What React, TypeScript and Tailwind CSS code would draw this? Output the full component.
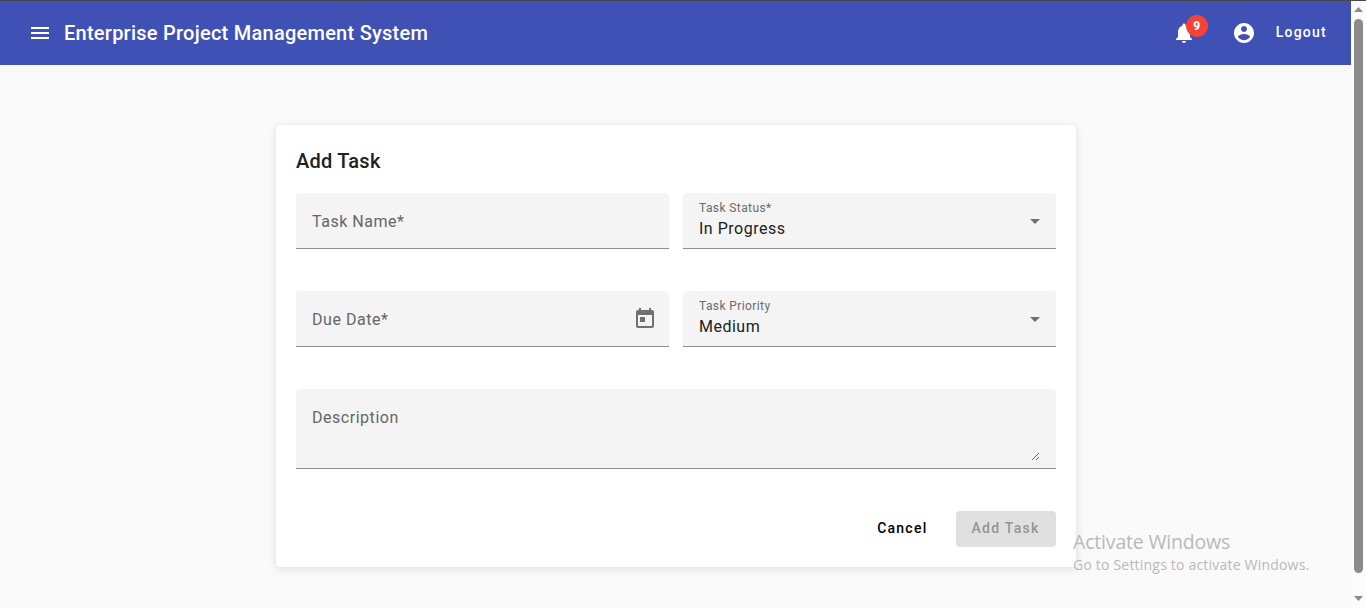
import type { ReactNode } from "react";

function Icon({ d, className = "" }: { d: string; className?: string }) {
  return (
    <svg viewBox="0 0 24 24" className={`size-6 shrink-0 fill-current ${className}`}>
      <path d={d} />
    </svg>
  );
}

const icons = {
  menu: "M3 18h18v-2H3v2zm0-5h18v-2H3v2zm0-7v2h18V6H3z",
  bell: "M12 22c1.1 0 2-.9 2-2h-4c0 1.1.89 2 2 2zm6-6v-5c0-3.07-1.64-5.64-4.5-6.32V4c0-.83-.67-1.5-1.5-1.5s-1.5.67-1.5 1.5v.68C7.63 5.36 6 7.92 6 11v5l-2 2v1h16v-1l-2-2z",
  account:
    "M12 2C6.48 2 2 6.48 2 12s4.48 10 10 10 10-4.48 10-10S17.52 2 12 2zm0 3c1.66 0 3 1.34 3 3s-1.34 3-3 3-3-1.34-3-3 1.34-3 3-3zm0 14.2c-2.5 0-4.71-1.28-6-3.22.03-1.99 4-3.08 6-3.08 1.99 0 5.97 1.09 6 3.08-1.29 1.94-3.5 3.22-6 3.22z",
  calendar:
    "M19 3h-1V1h-2v2H8V1H6v2H5c-1.11 0-1.99.9-1.99 2L3 19c0 1.1.89 2 2 2h14c1.1 0 2-.9 2-2V5c0-1.1-.9-2-2-2zm0 16H5V8h14v11zM7 10h5v5H7z",
};

function Field({ children, className = "h-14 items-center" }: { children: ReactNode; className?: string }) {
  return (
    <div className={`flex justify-between rounded-t border-b border-[#8c8c8c] bg-[#f4f4f4] px-4 ${className}`}>
      {children}
    </div>
  );
}

function Label({ children }: { children: ReactNode }) {
  return <span className="pt-0.5 text-base leading-6 tracking-[0.53px] text-[#666]">{children}</span>;
}

function SelectField({ label, value }: { label: string; value: string }) {
  return (
    <Field>
      <div className="flex flex-col">
        <span className="text-xs leading-4 tracking-[0.4px] text-[#6b6b6b]">{label}</span>
        <span className="mt-px text-base leading-6 tracking-[0.5px] text-[#212121]">{value}</span>
      </div>
      <svg viewBox="0 0 10 5" className="mt-0.5 h-[5px] w-2.5 fill-[#707070]">
        <path d="M0 0h10L5 5z" />
      </svg>
    </Field>
  );
}

export default function App() {
  return (
    <div className="relative flex h-[608px] w-full overflow-hidden bg-[#fafafa] font-['Roboto',sans-serif]">
      <div className="flex min-w-0 flex-1 flex-col items-center">
        <header className="flex h-[65px] w-full shrink-0 items-center border-t border-[#484848] bg-[#3f51b5] pr-6 pl-7 text-white">
          <Icon d={icons.menu} />
          <h1 className="ml-3 text-xl leading-8 font-medium tracking-[0.25px]">Enterprise Project Management System</h1>
          <div className="ml-auto flex items-center">
            <div className="relative">
              <Icon d={icons.bell} />
              <span className="absolute -top-1.5 left-3.5 flex size-[22px] items-center justify-center rounded-full bg-[#f44336] text-xs font-extrabold">
                9
              </span>
            </div>
            <Icon d={icons.account} className="ml-9" />
            <button className="ml-5 pb-0.5 text-sm leading-5 font-medium tracking-[1.25px]">Logout</button>
          </div>
        </header>

        <main className="mt-[60px] ml-px flex h-[442px] w-[800px] flex-col rounded bg-white px-5 pt-5 shadow-[0_2px_10px_rgba(0,0,0,0.12)]">
          <h2 className="text-xl leading-8 font-medium tracking-[0.23px] text-[#212121]">Add Task</h2>
          <div className="mt-4 grid grid-cols-2 gap-x-3.5 gap-y-[42px]">
            <Field>
              <Label>Task Name*</Label>
            </Field>
            <SelectField label="Task Status*" value="In Progress" />
            <Field>
              <Label>Due Date*</Label>
              <Icon d={icons.calendar} className="-mr-1 text-[#707070]" />
            </Field>
            <SelectField label="Task Priority" value="Medium" />
            <Field className="col-span-2 h-20 pt-[15px]">
              <Label>Description</Label>
              <svg viewBox="0 0 9 9" className="mb-[7px] size-[9px] self-end stroke-[#555]" fill="none">
                <path d="M1 8l7-7M5 8l3-3" strokeWidth="0.9" />
              </svg>
            </Field>
          </div>
          <div className="mt-[42px] flex justify-end gap-[13.5px] text-sm font-medium tracking-[1.25px]">
            <button className="h-9 px-[15px] pb-0.5 text-black">Cancel</button>
            <button disabled className="h-9 w-[100px] rounded bg-[#e0e0e0] pr-px pb-0.5 text-[#959595]">
              Add Task
            </button>
          </div>
        </main>
      </div>

      <div className="flex w-[15px] flex-col items-center border-t border-[#484848] bg-[#fcfcfc]">
        <svg viewBox="0 0 9 5" className="mt-1.5 h-[5px] w-[9px] shrink-0 fill-[#8b8b8b]">
          <path d="M4.5 0L9 5H0z" />
        </svg>
        <div className="mt-[7px] h-[554px] w-[9px] shrink-0 rounded-full bg-[#8b8b8b]" />
        <svg viewBox="0 0 9 5" className="mt-[23px] h-[5px] w-[9px] shrink-0 fill-[#8b8b8b]">
          <path d="M0 0h9L4.5 5z" />
        </svg>
      </div>

      <div className="absolute top-[528px] left-[1073px] font-['Open_Sans',sans-serif] whitespace-nowrap text-[#b9b9b9]">
        <p className="text-[19.5px] leading-7 tracking-[-0.18px]">Activate Windows</p>
        <p className="text-sm leading-[18px] tracking-[0.2px]">Go to Settings to activate Windows.</p>
      </div>
    </div>
  );
}
